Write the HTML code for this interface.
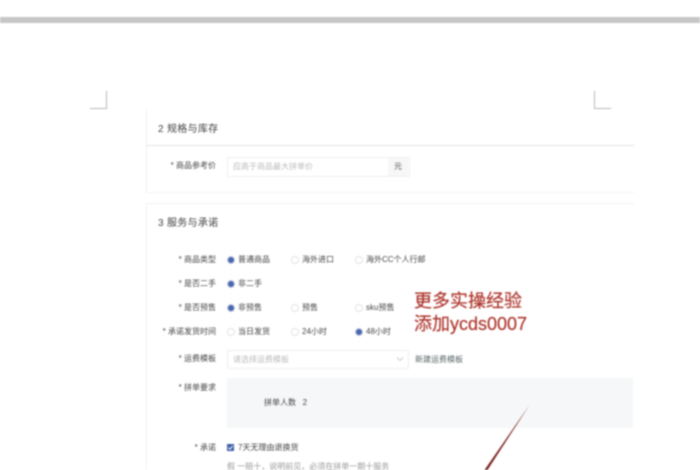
<!DOCTYPE html>
<html lang="zh">
<head>
<meta charset="utf-8">
<style>
html,body{margin:0;padding:0;background:#fff}
#p{position:relative;width:700px;height:470px;overflow:hidden;background:#fff;font-family:"Liberation Sans","Noto Sans CJK SC",sans-serif}
#c{position:absolute;inset:0;filter:blur(.7px)}
.a{position:absolute}
.t{position:absolute;white-space:nowrap;font-size:8px;line-height:12px;color:#444}
.l{position:absolute;white-space:nowrap;font-size:8px;line-height:12px;color:#444;right:484px;text-align:right}
.h{position:absolute;white-space:nowrap;font-size:10px;line-height:14px;color:#444;letter-spacing:.3px}
.r{position:absolute;width:6px;height:6px;border:1px solid #e2e2e2;border-radius:50%;background:#fff}
.r.on{border-color:#c5cfe6;background:#4a68ad}
.red{position:absolute;white-space:nowrap;font-size:18px;line-height:24px;color:#ad352c;-webkit-text-stroke:.2px #ad352c}
</style>
</head>
<body>
<div id="p"><div id="c">
<div class="a" style="left:0;top:17px;width:700px;height:6px;background:#c6c6c6"></div>

<div class="a" style="left:106px;top:91px;width:1px;height:17px;background:#b8b8b8"></div>
<div class="a" style="left:90px;top:108px;width:17px;height:1px;background:#b8b8b8"></div>
<div class="a" style="left:594px;top:91px;width:1px;height:17px;background:#b8b8b8"></div>
<div class="a" style="left:594px;top:108px;width:17px;height:1px;background:#b8b8b8"></div>

<div class="a" style="left:146px;top:110px;width:1px;height:82px;background:#f0f0f0"></div>
<div class="h" style="left:158px;top:123px">2 规格与库存</div>
<div class="a" style="left:146px;top:145px;width:488px;height:1px;background:#e4e4e4"></div>
<div class="l" style="top:160px">* 商品参考价</div>
<div class="a" style="left:227px;top:157px;width:181px;height:18px;border:1px solid #efefef"></div>
<div class="a" style="left:388px;top:158px;width:20px;height:18px;background:#f7f7f7"></div>
<div class="t" style="left:233px;top:161px;color:#bbb">应高于商品最大拼单价</div>
<div class="t" style="left:394px;top:161px;color:#555">元</div>
<div class="a" style="left:146px;top:192px;width:488px;height:1px;background:#f5f5f5"></div>

<div class="a" style="left:146px;top:203px;width:488px;height:1px;background:#f3f3f3"></div>
<div class="a" style="left:146px;top:203px;width:1px;height:267px;background:#f3f3f3"></div>
<div class="h" style="left:158px;top:217px">3 服务与承诺</div>

<div class="l" style="top:254px">* 商品类型</div>
<div class="r on" style="left:227px;top:256px"></div><div class="t" style="left:238px;top:254px">普通商品</div>
<div class="r" style="left:291px;top:256px"></div><div class="t" style="left:302px;top:254px">海外进口</div>
<div class="r" style="left:355px;top:256px"></div><div class="t" style="left:366px;top:254px">海外CC个人行邮</div>

<div class="l" style="top:278px">* 是否二手</div>
<div class="r on" style="left:227px;top:280px"></div><div class="t" style="left:238px;top:278px">非二手</div>

<div class="l" style="top:302px">* 是否预售</div>
<div class="r on" style="left:227px;top:304px"></div><div class="t" style="left:238px;top:302px">非预售</div>
<div class="r" style="left:291px;top:304px"></div><div class="t" style="left:302px;top:302px">预售</div>
<div class="r" style="left:355px;top:304px"></div><div class="t" style="left:366px;top:302px">sku预售</div>

<div class="l" style="top:326px">* 承诺发货时间</div>
<div class="r" style="left:227px;top:328px"></div><div class="t" style="left:238px;top:326px">当日发货</div>
<div class="r" style="left:291px;top:328px"></div><div class="t" style="left:302px;top:326px">24小时</div>
<div class="r on" style="left:355px;top:328px"></div><div class="t" style="left:366px;top:326px">48小时</div>

<div class="red" style="left:414px;top:289px">更多实操经验</div>
<div class="red" style="left:414px;top:312px">添加ycds0007</div>

<div class="l" style="top:353px">* 运费模板</div>
<div class="a" style="left:227px;top:350px;width:180px;height:17px;border:1px solid #eee;border-radius:2px"></div>
<div class="t" style="left:233px;top:354px;color:#bbb">请选择运费模板</div>
<svg class="a" style="left:396px;top:356px" width="8" height="6"><path d="M1 1.5 L4 4.5 L7 1.5" fill="none" stroke="#ccc"/></svg>
<div class="t" style="left:415px;top:354px;color:#566">新建运费模板</div>

<div class="l" style="top:382px">* 拼单要求</div>
<div class="a" style="left:227px;top:378px;width:406px;height:50px;background:#f6f7f8"></div>
<div class="t" style="left:264px;top:397px">拼单人数&nbsp;&nbsp;&nbsp;2</div>

<svg class="a" style="left:470px;top:400px" width="70" height="70"><path d="M59.5 5 L14.5 70 L17.5 70 Z" fill="#7a2420"/></svg>

<div class="l" style="top:442px">* 承诺</div>
<div class="a" style="left:227px;top:444px;width:7px;height:7px;background:#3f5ea8"></div>
<svg class="a" style="left:227px;top:444px" width="7" height="7"><path d="M1.2 3.5 L3 5.3 L5.8 1.8" fill="none" stroke="#fff" stroke-width="1"/></svg>
<div class="t" style="left:238px;top:442px">7天无理由退换货</div>
<div class="t" style="left:227px;top:461px;color:#999">假 一赔十，说明前见，必须在拼单一期十服务</div>
</div></div>
</body>
</html>
